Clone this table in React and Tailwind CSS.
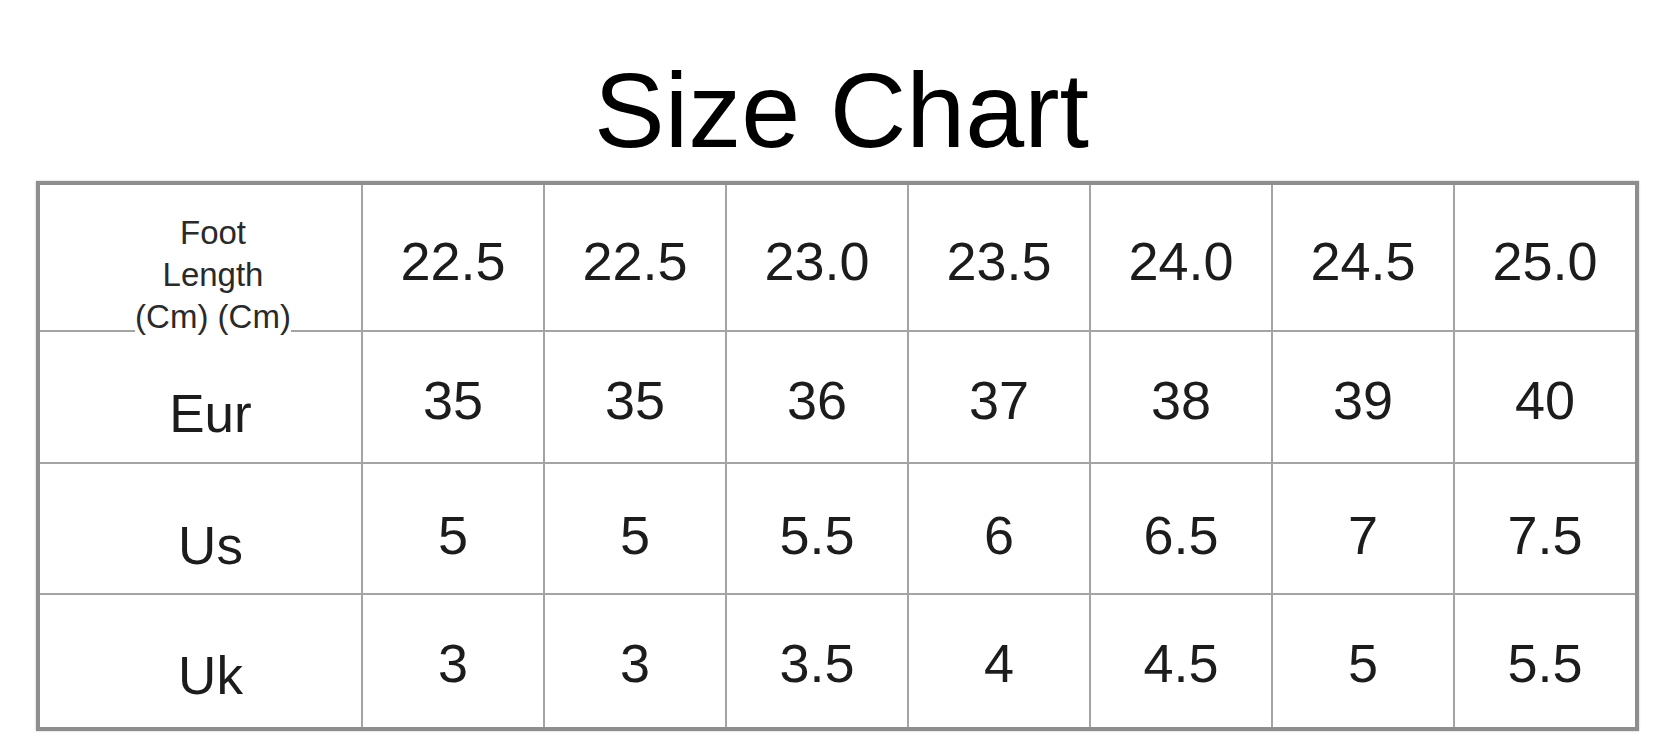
import React from "react";

const sizes = [
  { label: "Eur", values: ["35", "35", "36", "37", "38", "39", "40"], pad: "pt-[6px]", labelPad: "pt-[32px]" },
  { label: "Us", values: ["5", "5", "5.5", "6", "6.5", "7", "7.5"], pad: "pt-[12px]", labelPad: "pt-[34px]" },
  { label: "Uk", values: ["3", "3", "3.5", "4", "4.5", "5", "5.5"], pad: "pt-[4px]", labelPad: "pt-[28px]" },
];

const footLength = ["22.5", "22.5", "23.0", "23.5", "24.0", "24.5", "25.0"];

export default function App() {
  return (
    <div className="min-h-[750px] w-full bg-white font-['Liberation_Sans',Arial,sans-serif]">
      <h1 className="pl-[8px] pt-[57px] text-center text-[106px] leading-none text-black">
        Size Chart
      </h1>

      <div className="mx-auto mt-[18px] w-[1603px] border-4 border-[#8e8e8e] bg-[#a4a4a4] shadow-[0_0_2px_rgba(0,0,0,0.25)]">
        <div className="grid grid-cols-[321px_repeat(7,1fr)] grid-rows-[145px_130px_129px_132px] gap-[2px]">
          {/* header row */}
          <div className="flex justify-center bg-white pl-[25px] pt-[27px]">
            <div className="relative z-10 h-fit bg-white text-center text-[33px] leading-[42px] text-[#2a2a2a]">
              Foot
              <br />
              Length
              <br />
              (Cm) (Cm)
            </div>
          </div>
          {footLength.map((v, i) => (
            <div key={i} className="flex items-center justify-center bg-white pt-[6px] text-[54px] leading-none text-[#1c1c1c]">
              {v}
            </div>
          ))}

          {sizes.map((row) => (
            <React.Fragment key={row.label}>
              <div className={`flex items-center justify-center bg-white pl-[20px] text-[53px] leading-none text-[#1c1c1c] ${row.labelPad}`}>
                {row.label}
              </div>
              {row.values.map((v, i) => (
                <div key={i} className={`flex items-center justify-center bg-white text-[54px] leading-none text-[#1c1c1c] ${row.pad}`}>
                  {v}
                </div>
              ))}
            </React.Fragment>
          ))}
        </div>
      </div>
    </div>
  );
}
